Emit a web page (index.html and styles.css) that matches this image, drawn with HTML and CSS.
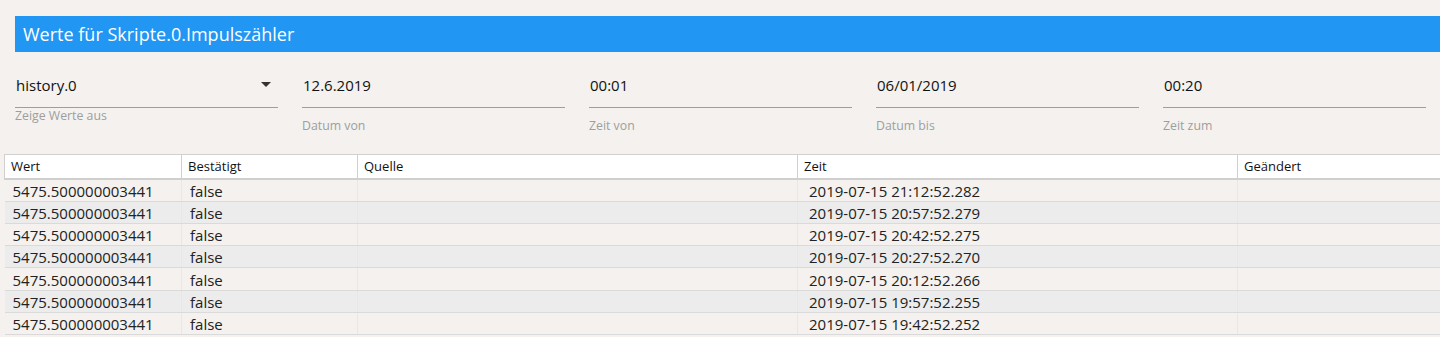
FILE: index.html
```html
<!DOCTYPE html>
<html lang="de">

<head>
    <meta charset="UTF-8" />
    <meta name="viewport" content="width=device-width, initial-scale=1.0" />
    <title>Werte für Skripte.0.Impulszähler</title>
    <link rel="stylesheet" href="styles.css">
</head>

<body>
    <div class="title-bar">Werte für Skripte.0.Impulszähler</div>

    <div class="filters">
        <div class="field">
            <div class="field-input">
                <span>history.0</span>
                <span class="arrow"></span>
            </div>
            <div class="field-label">Zeige Werte aus</div>
        </div>
        <div class="field">
            <div class="field-input">12.6.2019</div>
            <div class="field-label low">Datum von</div>
        </div>
        <div class="field">
            <div class="field-input">00:01</div>
            <div class="field-label low">Zeit von</div>
        </div>
        <div class="field">
            <div class="field-input">06/01/2019</div>
            <div class="field-label low">Datum bis</div>
        </div>
        <div class="field">
            <div class="field-input">00:20</div>
            <div class="field-label low">Zeit zum</div>
        </div>
    </div>

    <table class="history">
        <colgroup>
            <col class="col-val">
            <col class="col-ack">
            <col class="col-from">
            <col class="col-ts">
            <col>
        </colgroup>
        <thead>
            <tr>
                <th>Wert</th>
                <th>Bestätigt</th>
                <th>Quelle</th>
                <th>Zeit</th>
                <th>Geändert</th>
            </tr>
        </thead>
        <tbody>
            <tr><td>5475.500000003441</td><td>false</td><td></td><td>2019-07-15 21:12:52.282</td><td></td></tr>
            <tr><td>5475.500000003441</td><td>false</td><td></td><td>2019-07-15 20:57:52.279</td><td></td></tr>
            <tr><td>5475.500000003441</td><td>false</td><td></td><td>2019-07-15 20:42:52.275</td><td></td></tr>
            <tr><td>5475.500000003441</td><td>false</td><td></td><td>2019-07-15 20:27:52.270</td><td></td></tr>
            <tr><td>5475.500000003441</td><td>false</td><td></td><td>2019-07-15 20:12:52.266</td><td></td></tr>
            <tr><td>5475.500000003441</td><td>false</td><td></td><td>2019-07-15 19:57:52.255</td><td></td></tr>
            <tr><td>5475.500000003441</td><td>false</td><td></td><td>2019-07-15 19:42:52.252</td><td></td></tr>
        </tbody>
    </table>
</body>

</html>
```

FILE: styles.css
```css
body {
    font-family: "Open Sans", "Noto Sans", sans-serif;
    margin: 0;
    padding: 16px 0 0 0;
    background: #f4f1ee;
    color: #222;
    overflow: hidden;
}

.title-bar {
    margin-left: 15px;
    height: 36px;
    line-height: 37px;
    padding-left: 8px;
    background: #2196f3;
    color: #fff;
    font-size: 18px;
}

.filters {
    display: grid;
    grid-template-columns: repeat(5, 263px);
    column-gap: 24px;
    margin: 18px 0 0 15px;
}

.field-input {
    display: flex;
    align-items: center;
    justify-content: space-between;
    height: 29px;
    padding: 0 0 8px 1px;
    border-bottom: 1px solid #9e9e9e;
    font-size: 15px;
    color: #111;
}

.arrow {
    width: 0;
    height: 0;
    margin-right: 7px;
    border-left: 5px solid transparent;
    border-right: 5px solid transparent;
    border-top: 5px solid #333;
}

.field-label {
    margin-top: -1px;
    font-size: 12.3px;
    color: #9e9e9e;
}

.field-label.low {
    margin-top: 9px;
}

.history {
    margin: 20px 0 0 4px;
    width: 1460px;
    border-collapse: collapse;
    table-layout: fixed;
}

.col-val { width: 177px; }
.col-ack { width: 176px; }
.col-from { width: 440px; }
.col-ts { width: 440px; }

.history th {
    box-sizing: border-box;
    height: 24px;
    padding: 0 0 0 6px;
    background: #fff;
    border: 1px solid #d0d0d0;
    border-bottom: 2px solid #cfcfcf;
    font-size: 13px;
    font-weight: normal;
    text-align: left;
    color: #111;
}

.history td {
    box-sizing: border-box;
    height: 22.3px;
    padding: 1px 0 0 8px;
    border-bottom: 1px solid #dadada;
    border-left: 1px solid #e9e6e3;
    font-size: 15px;
    line-height: 20px;
    white-space: nowrap;
}

.history td:first-child {
    border-left: none;
}

.history td:nth-child(4) {
    padding-left: 11px;
}

.history tbody tr:nth-child(even) {
    background: #ececec;
}
```
